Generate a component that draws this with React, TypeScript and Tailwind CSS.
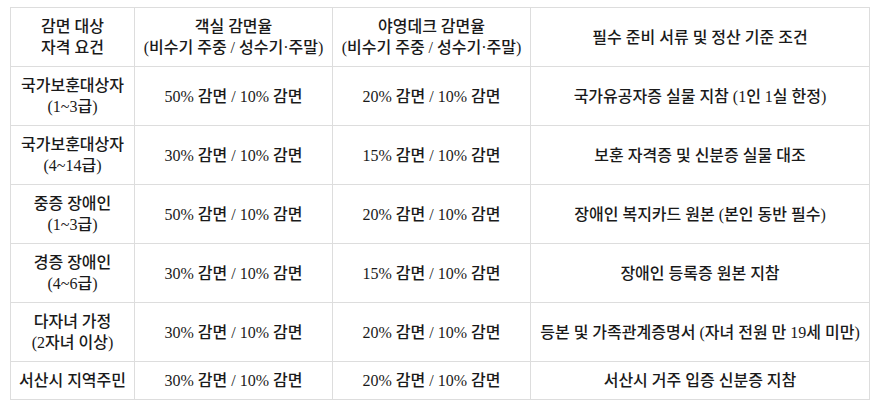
type Row = {
  target: string[];
  room: string;
  deck: string;
  docs: string;
};

const rows: Row[] = [
  { target: ['국가보훈대상자', '(1~3급)'], room: '50% 감면 / 10% 감면', deck: '20% 감면 / 10% 감면', docs: '국가유공자증 실물 지참 (1인 1실 한정)' },
  { target: ['국가보훈대상자', '(4~14급)'], room: '30% 감면 / 10% 감면', deck: '15% 감면 / 10% 감면', docs: '보훈 자격증 및 신분증 실물 대조' },
  { target: ['중증 장애인', '(1~3급)'], room: '50% 감면 / 10% 감면', deck: '20% 감면 / 10% 감면', docs: '장애인 복지카드 원본 (본인 동반 필수)' },
  { target: ['경증 장애인', '(4~6급)'], room: '30% 감면 / 10% 감면', deck: '15% 감면 / 10% 감면', docs: '장애인 등록증 원본 지참' },
  { target: ['다자녀 가정', '(2자녀 이상)'], room: '30% 감면 / 10% 감면', deck: '20% 감면 / 10% 감면', docs: '등본 및 가족관계증명서 (자녀 전원 만 19세 미만)' },
  { target: ['서산시 지역주민'], room: '30% 감면 / 10% 감면', deck: '20% 감면 / 10% 감면', docs: '서산시 거주 입증 신분증 지참' },
];

const cell = 'border border-[#dddddd] px-1 py-2 text-center align-middle whitespace-nowrap';

export default function App() {
  return (
    <div className="min-h-screen bg-white pl-[10px] pt-[7px] font-['Liberation_Serif','Noto_Sans_CJK_KR',serif] text-[16px] leading-[21px] font-medium text-[#1a1a1a]">
      <table className="w-[859px] table-fixed border-collapse">
        <colgroup>
          <col className="w-[124px]" />
          <col className="w-[198px]" />
          <col className="w-[198px]" />
          <col className="w-[339px]" />
        </colgroup>
        <thead>
          <tr>
            <th className={`${cell} font-medium`}>
              <div>감면 대상</div>
              <div>자격 요건</div>
            </th>
            <th className={`${cell} font-medium`}>
              <div>객실 감면율</div>
              <div>(비수기 주중 / 성수기·주말)</div>
            </th>
            <th className={`${cell} font-medium`}>
              <div>야영데크 감면율</div>
              <div>(비수기 주중 / 성수기·주말)</div>
            </th>
            <th className={`${cell} font-medium`}>필수 준비 서류 및 정산 기준 조건</th>
          </tr>
        </thead>
        <tbody>
          {rows.map((row) => (
            <tr key={row.target.join('')}>
              <td className={cell}>
                {row.target.map((line) => (
                  <div key={line}>{line}</div>
                ))}
              </td>
              <td className={cell}>{row.room}</td>
              <td className={cell}>{row.deck}</td>
              <td className={cell}>{row.docs}</td>
            </tr>
          ))}
        </tbody>
      </table>
    </div>
  );
}
